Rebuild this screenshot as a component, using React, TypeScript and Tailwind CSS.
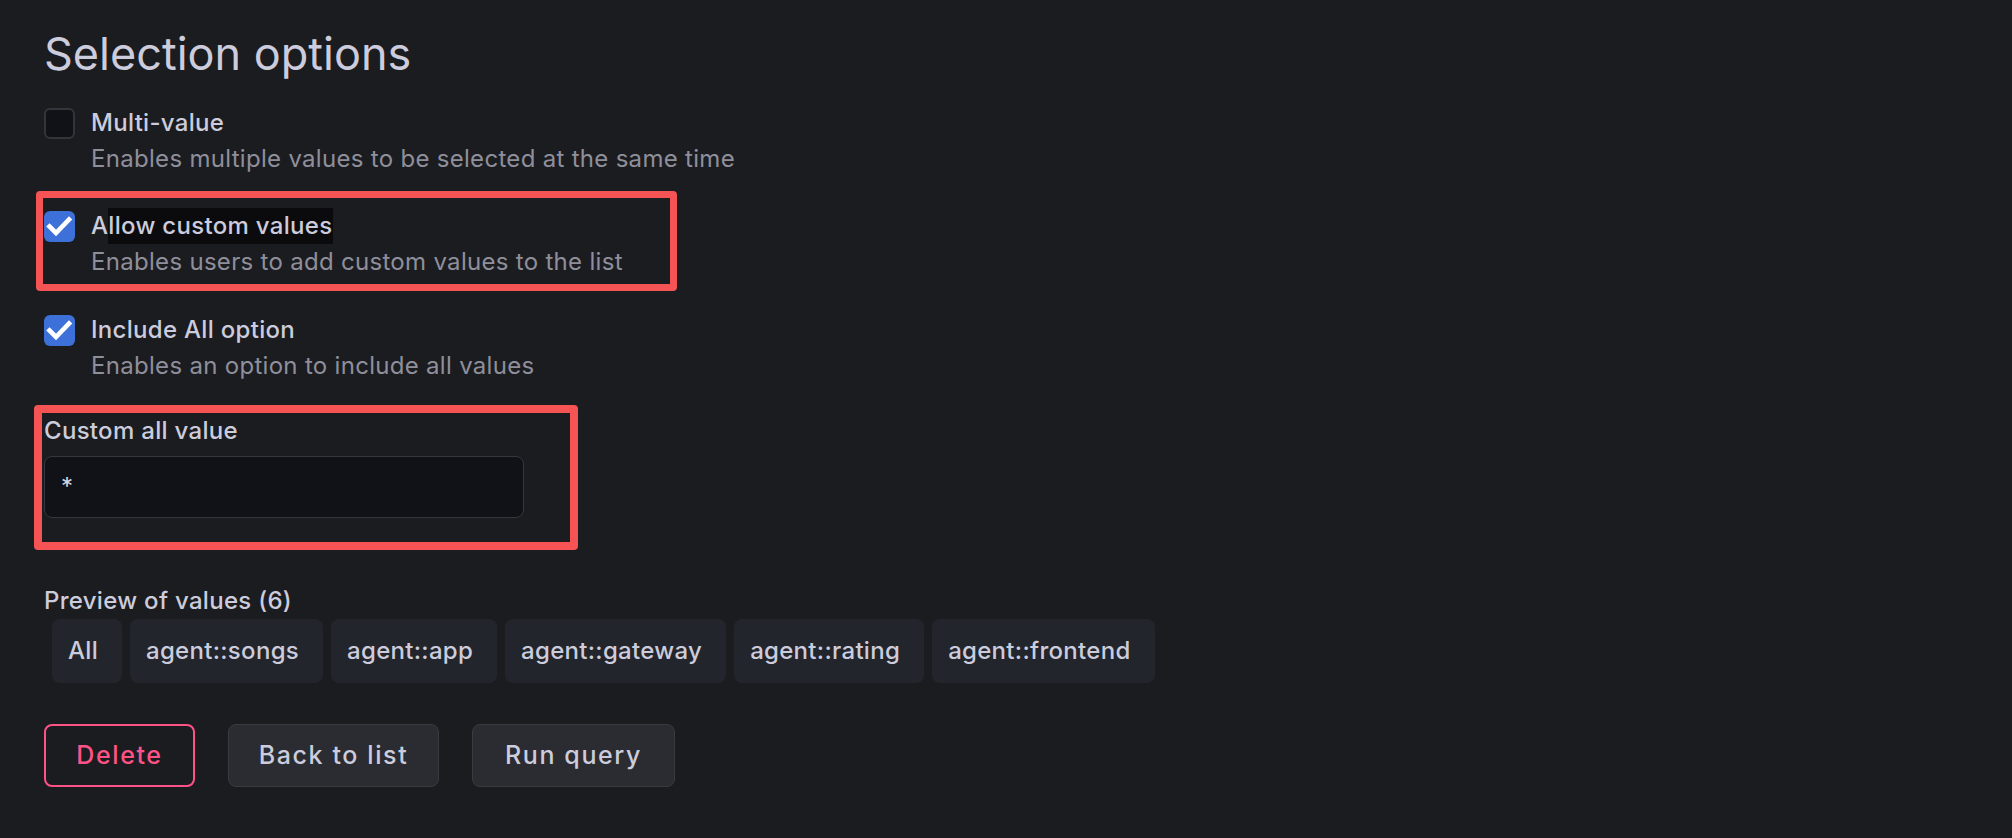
import React from 'react';

type OptionItem = {
  label: string;
  description: string;
  checked: boolean;
  highlighted?: boolean;
};

const options: OptionItem[] = [
  {
    label: 'Multi-value',
    description: 'Enables multiple values to be selected at the same time',
    checked: false,
  },
  {
    label: 'Allow custom values',
    description: 'Enables users to add custom values to the list',
    checked: true,
    highlighted: true,
  },
  {
    label: 'Include All option',
    description: 'Enables an option to include all values',
    checked: true,
  },
];

const previewValues = [
  'All',
  'agent::songs',
  'agent::app',
  'agent::gateway',
  'agent::rating',
  'agent::frontend',
];

const Checkbox = ({ checked }: { checked: boolean }) => {
  if (!checked) {
    return (
      <div className="w-[31px] h-[31px] rounded-[6px] bg-[#111217] border-2 border-[#34353b]" />
    );
  }
  return (
    <div className="w-[31px] h-[31px] rounded-[6px] bg-[#3d71d9] flex items-center justify-center">
      <svg width="31" height="31" viewBox="0 0 31 31">
        <polyline
          points="5.5,15.5 12,22 25,8.5"
          fill="none"
          stroke="#ffffff"
          strokeWidth="4.6"
          strokeLinecap="square"
          strokeLinejoin="miter"
        />
      </svg>
    </div>
  );
};

const OptionRow = ({ item }: { item: OptionItem }) => {
  return (
    <div className="flex gap-[16px]">
      <div className="h-[36px] flex items-center">
        <Checkbox checked={item.checked} />
      </div>
      <div className="flex flex-col">
        <div className="text-[24px] leading-[36px] font-medium tracking-[0.3px] text-[#ccccdc]">
          {item.highlighted ? (
            <>
              A<span className="inline-block bg-[#0b0b0d] pr-[1px]">llow custom values</span>
            </>
          ) : (
            item.label
          )}
        </div>
        <div className="text-[24px] leading-[36px] tracking-[0.3px] text-[#8f8f9b]">
          {item.description}
        </div>
      </div>
    </div>
  );
};

// red annotation frame drawn over the screenshot
const Annotation = ({ className }: { className: string }) => (
  <div
    className={`absolute border-[#f65354] rounded-[4px] pointer-events-none ${className}`}
  />
);

export default function App() {
  return (
    <div
      className="min-h-[838px] w-full bg-[#1b1c20] pl-[44px] pt-[28px] text-[#ccccdc]"
      style={{ fontFamily: 'Inter, "Noto Sans", sans-serif' }}
    >
      <h3 className="text-[45px] leading-[52px] font-normal text-[#ccccdc]">
        Selection options
      </h3>

      <div className="mt-[25px] flex flex-col">
        <OptionRow item={options[0]} />
        <div className="relative mt-[31px]">
          <Annotation className="-top-[17px] -left-[8px] w-[641px] h-[100px] border-[7px]" />
          <OptionRow item={options[1]} />
        </div>
        <div className="mt-[32px]">
          <OptionRow item={options[2]} />
        </div>
      </div>

      <div className="relative mt-[29px] w-[480px]">
        <Annotation className="-top-[8px] -left-[10px] w-[544px] h-[145px] border-[8px]" />
        <div className="text-[24px] leading-[36px] font-medium tracking-[0.3px] text-[#ccccdc]">
          Custom all value
        </div>
        <div className="mt-[7px] h-[62px] w-[480px] rounded-[8px] border border-[#36373d] bg-[#111217] px-[16px] flex items-center text-[24px] text-[#d8d8e2]">
          *
        </div>
      </div>

      <div className="mt-[65px] text-[24px] leading-[36px] font-medium tracking-[0.3px] text-[#ccccdc]">
        Preview of values (6)
      </div>
      <div className="ml-[8px] flex gap-[8px]">
        {previewValues.map((value) => (
          <div
            key={value}
            className="h-[64px] flex items-center pl-[16px] pr-[24px] rounded-[8px] bg-[#22252b] text-[24px] font-medium tracking-[0.3px] text-[#ccccdc]"
          >
            {value}
          </div>
        ))}
      </div>

      <div className="mt-[41px] flex gap-[33px]">
        <button className="h-[63px] w-[151px] flex items-center justify-center rounded-[8px] border-2 border-[#ff5286] bg-transparent text-[25px] font-medium tracking-[1.6px] text-[#ff5286]">
          Delete
        </button>
        <button className="h-[63px] w-[211px] flex items-center justify-center rounded-[8px] border border-[#3a3b41] bg-[#2b2c31] text-[25px] font-medium tracking-[1.6px] text-[#ccccdc]">
          Back to list
        </button>
        <button className="h-[63px] w-[203px] flex items-center justify-center rounded-[8px] border border-[#3a3b41] bg-[#2b2c31] text-[25px] font-medium tracking-[1.6px] text-[#ccccdc]">
          Run query
        </button>
      </div>
    </div>
  );
}
